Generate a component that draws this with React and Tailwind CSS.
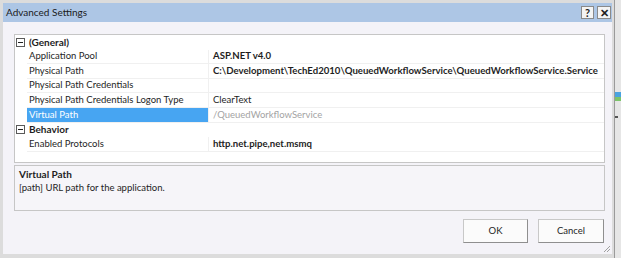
import React from "react";

const rows = [
  { type: "cat", label: "(General)" },
  { label: "Application Pool", value: "ASP.NET v4.0", bold: true },
  {
    label: "Physical Path",
    value: "C:\\Development\\TechEd2010\\QueuedWorkflowService\\QueuedWorkflowService.Service",
    bold: true,
  },
  { label: "Physical Path Credentials", value: "" },
  { label: "Physical Path Credentials Logon Type", value: "ClearText" },
  { label: "Virtual Path", value: "/QueuedWorkflowService", selected: true },
  { type: "cat", label: "Behavior" },
  { label: "Enabled Protocols", value: "http.net.pipe,net.msmq", bold: true },
];

const Minus = () => (
  <span className="w-[9px] h-[9px] border border-[#5a5a5a] bg-white flex items-center justify-center">
    <span className="w-[5px] h-[1px] bg-[#222]" />
  </span>
);

const App = () => {
  return (
    <div
      className="w-[621px] h-[258px] flex bg-[#d2d2d2] overflow-hidden text-[#1e1e1e]"
      style={{ fontFamily: "Lato, 'Open Sans', sans-serif" }}
    >
      <div className="w-[615px] h-full bg-[#dcdcdc] border-r border-[#9a9a9a] pt-[3px] pl-[3px] pr-[2px] pb-[4px] flex flex-col">
        {/* title bar */}
        <div className="h-[19px] bg-[#adc6e5] flex items-center pl-[3px] pr-[1px] shrink-0">
          <span className="text-[10px] text-[#1a1a1a]">Advanced Settings</span>
          <div className="ml-auto flex gap-[3px]">
            <div className="w-[13px] h-[13px] bg-[#f4f4f4] border border-[#8a8a8a] flex items-center justify-center text-[11px] font-bold leading-none">
              ?
            </div>
            <div className="w-[14px] h-[13px] bg-[#f4f4f4] border border-[#8a8a8a] flex items-center justify-center text-[11px] font-bold leading-none">
              ✕
            </div>
          </div>
        </div>

        {/* body */}
        <div className="flex-1 bg-[#f4f3f8] flex flex-col pl-[11px] pr-[7px] pt-[12px] relative">
          {/* property grid */}
          <div className="h-[129px] bg-white border border-[#c6c6c6] flex flex-col">
            {rows.map((r, i) =>
              r.type === "cat" ? (
                <div key={i} className="h-[14.6px] flex items-center gap-[4px] pl-[1px] text-[10px] font-bold">
                  <Minus />
                  <span>{r.label}</span>
                </div>
              ) : (
                <div key={i} className="h-[14.6px] flex text-[9.5px]">
                  <div className="w-[12px] shrink-0" />
                  <div
                    className={
                      r.selected
                        ? "w-[181px] shrink-0 bg-[#47a5f2] text-white pl-[2px] flex items-center border-b border-[#f0f0f0]"
                        : "w-[181px] shrink-0 pl-[2px] flex items-center border-b border-[#f0f0f0]"
                    }
                  >
                    {r.label}
                  </div>
                  <div
                    className={
                      "flex-1 pl-[4px] flex items-center whitespace-nowrap border-b border-l border-[#f0f0f0] " +
                      (r.selected ? "text-[#a3a3a3]" : "") +
                      (r.bold ? " font-bold text-[9.6px]" : "")
                    }
                  >
                    {r.value}
                  </div>
                </div>
              )
            )}
          </div>

          {/* description */}
          <div className="mt-[2px] h-[46px] bg-[#f6f5f9] border border-[#c6c6c6] pl-[4px] pt-[1px] text-[9.5px] leading-[14px]">
            <div className="font-bold text-[10px]">Virtual Path</div>
            <div>[path] URL path for the application.</div>
          </div>

          {/* buttons */}
          <div className="flex justify-end gap-[10px] mt-[8px] pr-[1px]">
            <button className="w-[65px] h-[24px] bg-[#fbfbfb] border border-[#c8c8c8] border-r-[#8f8f8f] border-b-[#8f8f8f] text-[9.5px]">
              OK
            </button>
            <button className="w-[66px] h-[24px] bg-[#fbfbfb] border border-[#c8c8c8] border-r-[#8f8f8f] border-b-[#8f8f8f] text-[9.5px]">
              Cancel
            </button>
          </div>

          {/* resize grip */}
          <svg className="absolute right-[1px] bottom-[1px]" width="9" height="9" viewBox="0 0 9 9">
            <path d="M8 2 L2 8 M8 5 L5 8 M8 8 L8 8" stroke="#a0a0a0" strokeWidth="1" />
          </svg>
        </div>
      </div>
      <div className="flex-1 bg-[#e6e6e6] flex flex-col pt-[92px]">
        <div className="h-[5px] bg-[#4aa3e0]" />
        <div className="h-[4px] bg-[#7cc46a]" />
        <div className="h-[15px]" />
        <div className="h-[2px] w-[3px] bg-[#555]" />
      </div>
    </div>
  );
};

export default App;
